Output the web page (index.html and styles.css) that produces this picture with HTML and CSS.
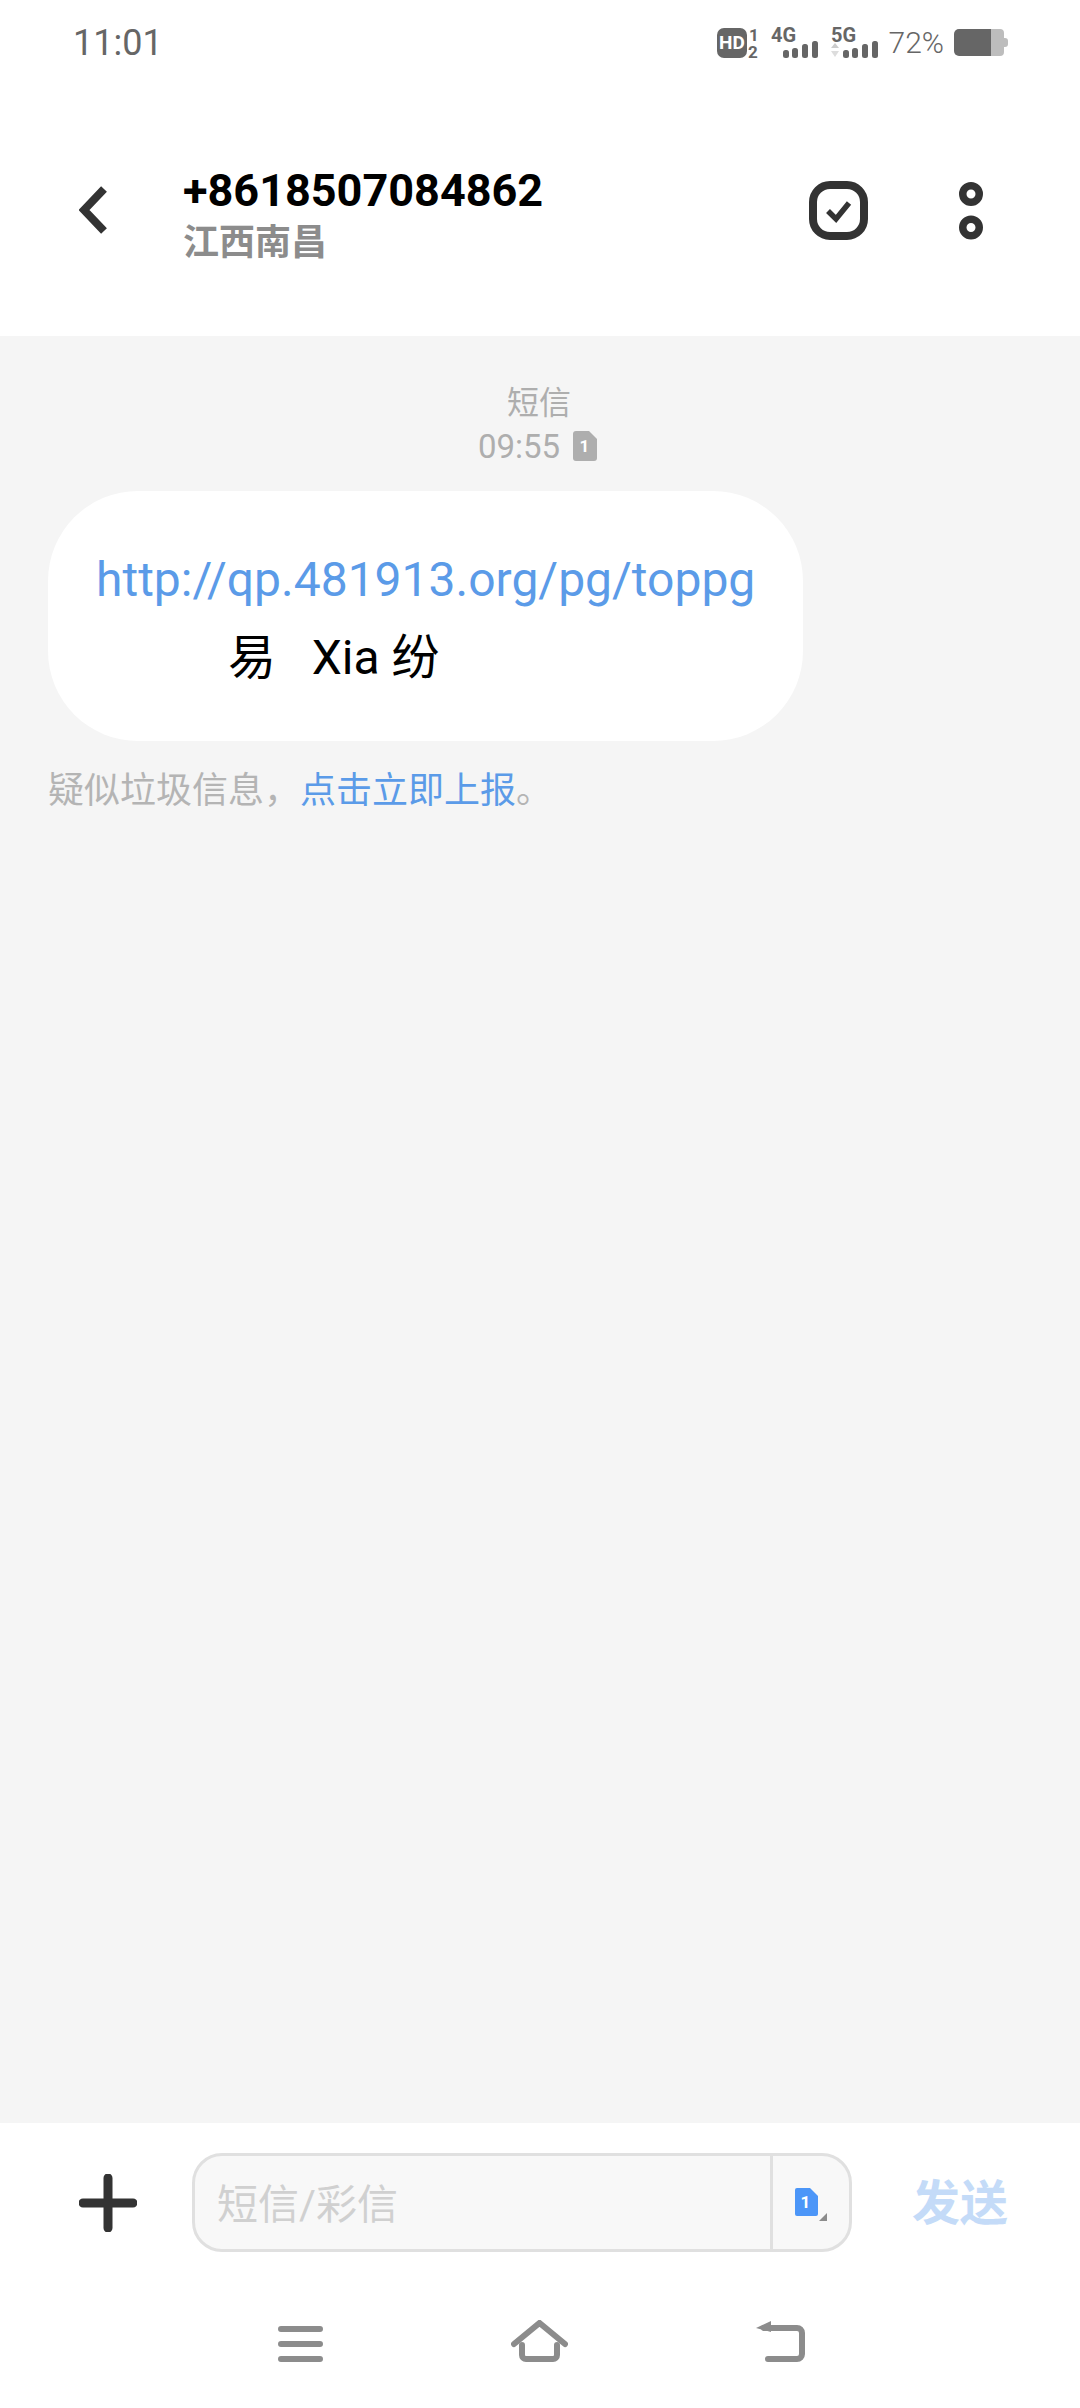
FILE: index.html
```html
<!DOCTYPE html>
<html lang="zh-CN">
<head>
    <meta charset="UTF-8">
    <meta name="viewport" content="width=device-width, initial-scale=1.0">
    <title>+8618507084862</title>
    <link rel="stylesheet" href="styles.css">
</head>
<body>
    <div class="page">
        <!-- Status bar -->
        <div class="status-bar">
            <span class="clock">11:01</span>
            <div class="status-icons">
                <svg class="icon-hd" width="42" height="44" viewBox="0 -7 42 44">
                    <rect x="0" y="0" width="30" height="30" rx="7" fill="#666"/>
                    <text x="15" y="21" class="hd-text" text-anchor="middle">HD</text>
                    <text x="37" y="13" class="sim-text" text-anchor="middle">1</text>
                    <text x="36" y="30" class="sim-text" text-anchor="middle">2</text>
                </svg>
                <svg class="icon-net" width="47" height="44" viewBox="0 -7 47 44">
                    <text x="0" y="14" class="net-text">4G</text>
                    <rect x="12" y="22" width="6" height="8" rx="2.5" fill="#666"/>
                    <rect x="21" y="20" width="6" height="10" rx="2.5" fill="#666"/>
                    <rect x="31" y="16" width="6" height="14" rx="2.5" fill="#666"/>
                    <rect x="41" y="13" width="6" height="17" rx="2.5" fill="#666"/>
                </svg>
                <svg class="icon-net" width="47" height="44" viewBox="0 -7 47 44">
                    <text x="0" y="14" class="net-text">5G</text>
                    <path d="M0 20 L4 15 L8 20 Z" fill="#ccc"/>
                    <path d="M0 23 L8 23 L4 29 Z" fill="#ddd"/>
                    <rect x="12" y="22" width="6" height="8" rx="2.5" fill="#666"/>
                    <rect x="21" y="20" width="6" height="10" rx="2.5" fill="#666"/>
                    <rect x="31" y="16" width="6" height="14" rx="2.5" fill="#666"/>
                    <rect x="41" y="13" width="6" height="17" rx="2.5" fill="#666"/>
                </svg>
                <span class="battery-text">72%</span>
                <svg class="icon-battery" width="54" height="27" viewBox="0 0 54 27">
                    <path d="M5 0 H37 V27 H5 A5 5 0 0 1 0 22 V5 A5 5 0 0 1 5 0 Z" fill="#666"/>
                    <path d="M37 0 H46 A4 4 0 0 1 50 4 V9 H51 A3 3 0 0 1 54 12 V15 A3 3 0 0 1 51 18 H50 V23 A4 4 0 0 1 46 27 H37 Z" fill="#bdbdbd"/>
                </svg>
            </div>
        </div>

        <!-- Header -->
        <div class="header">
            <svg class="back" width="29" height="48" viewBox="0 0 29 48">
                <path d="M25 3 L5 24 L25 45" fill="none" stroke="#333" stroke-width="8"/>
            </svg>
            <div class="contact">
                <div class="contact-number">+8618507084862</div>
                <div class="contact-place">江西南昌</div>
            </div>
            <svg class="select" width="59" height="59" viewBox="0 0 59 59">
                <rect x="4" y="4" width="51" height="51" rx="17" fill="none" stroke="#333" stroke-width="8"/>
                <path d="M19 30 L27 38 L40 22" fill="none" stroke="#333" stroke-width="5.5"/>
            </svg>
            <svg class="more" width="24" height="59" viewBox="0 0 24 59">
                <circle cx="12" cy="13" r="8.25" fill="none" stroke="#333" stroke-width="7.5"/>
                <circle cx="12" cy="46.5" r="8.25" fill="none" stroke="#333" stroke-width="7.5"/>
            </svg>
        </div>

        <!-- Messages -->
        <div class="messages">
            <div class="msg-type">短信</div>
            <div class="msg-time">
                09:55
                <svg class="sim-small" width="24" height="30" viewBox="0 0 24 30">
                    <path d="M3 0 H16 L24 8 V27 A3 3 0 0 1 21 30 H3 A3 3 0 0 1 0 27 V3 A3 3 0 0 1 3 0 Z" fill="#aeaeae"/>
                    <text x="11.5" y="21" class="sim-num" text-anchor="middle">1</text>
                </svg>
            </div>
            <div class="bubble">
                <div class="bubble-link">http://qp.481913.org/pg/toppg</div>
                <div class="bubble-text">易&nbsp;&nbsp;&nbsp;Xia 纷</div>
            </div>
            <div class="spam-note">疑似垃圾信息，<span class="spam-link">点击立即上报</span>。</div>
        </div>

        <!-- Composer -->
        <div class="composer">
            <svg class="plus" width="58" height="58" viewBox="0 0 58 58">
                <path d="M29 4 V54 M4 29 H54" stroke="#333" stroke-width="9" stroke-linecap="round"/>
            </svg>
            <div class="input-box">
                <div class="input-field">短信/彩信</div>
                <div class="input-sim">
                    <svg width="32" height="34" viewBox="0 0 32 34">
                        <path d="M2 0 H15 L23 8 V26 A2 2 0 0 1 21 28 H2 A2 2 0 0 1 0 26 V2 A2 2 0 0 1 2 0 Z" fill="#4c96f8"/>
                        <text x="10.5" y="20" class="sim-num" text-anchor="middle">1</text>
                        <path d="M32 25 V33 H24 Z" fill="#8c8c8c"/>
                    </svg>
                </div>
            </div>
            <div class="send">发送</div>
        </div>

        <!-- Navigation bar -->
        <div class="nav-bar">
            <svg width="45" height="42" viewBox="0 0 45 42">
                <path d="M3 10 H42 M3 25 H42 M3 40 H42" stroke="#8c8c8c" stroke-width="6" stroke-linecap="round" transform="translate(0 -1)"/>
            </svg>
            <svg width="57" height="42" viewBox="0 0 57 42">
                <path d="M3 24 L28.5 3 L54 24" fill="none" stroke="#8c8c8c" stroke-width="6" stroke-linecap="round"/>
                <path d="M11 25 V35 A4 4 0 0 0 15 39 H42 A4 4 0 0 0 46 35 V25" fill="none" stroke="#8c8c8c" stroke-width="6" stroke-linecap="round"/>
            </svg>
            <svg width="49" height="42" viewBox="0 0 49 42">
                <path d="M15 1 L0 8 L15 12 Z" fill="#8c8c8c"/>
                <path d="M8 8 H41 A5 5 0 0 1 46 13 V34 A5 5 0 0 1 41 39 H12" fill="none" stroke="#8c8c8c" stroke-width="6" stroke-linecap="round"/>
            </svg>
        </div>
    </div>
</body>
</html>
```

FILE: styles.css
```css
body {
    margin: 0;
    background-color: #fff;
    font-family: Roboto, "Noto Sans CJK SC", sans-serif;
}
svg {
    display: block;
    flex-shrink: 0;
}
.page {
    display: flex;
    flex-direction: column;
    height: 2408px;
    overflow: hidden;
}

/* Status bar */
.status-bar {
    display: flex;
    justify-content: space-between;
    align-items: center;
    height: 84px;
    padding: 0 72px 0 73px;
}
.clock {
    padding-top: 2px;
    font-size: 36px;
    color: #666;
}
.status-icons {
    display: flex;
    align-items: center;
    margin-top: 1px;
}
.icon-hd {
    margin-right: 12px;
}
.icon-net {
    margin-right: 13px;
}
.hd-text {
    font: 700 19px Roboto, sans-serif;
    fill: #fff;
}
.sim-text {
    font: 700 17px Roboto, sans-serif;
    fill: #666;
}
.net-text {
    font: 700 20px Roboto, sans-serif;
    fill: #666;
}
.battery-text {
    font-size: 30px;
    font-weight: 300;
    color: #666;
    margin-left: -2px;
    margin-right: 10px;
}

/* Header */
.header {
    display: flex;
    align-items: center;
    height: 252px;
    padding: 0 97px 0 79px;
}
.contact {
    flex: 1;
    margin-left: 75px;
    margin-top: 11px;
}
.contact-number {
    font-size: 45px;
    line-height: 50px;
    font-weight: 700;
    color: #000;
}
.contact-place {
    margin-top: 5px;
    font-size: 36px;
    line-height: 44px;
    font-weight: 700;
    color: #8c8c8c;
}
.more {
    margin-left: 91px;
}

/* Messages */
.messages {
    flex: 1;
    display: flex;
    flex-direction: column;
    padding: 45px 48px 0;
    background-color: #f5f5f5;
}
.msg-type {
    padding-right: 2px;
    font-size: 32px;
    line-height: 44px;
    color: #aeaeae;
    text-align: center;
}
.msg-time {
    display: flex;
    justify-content: center;
    align-items: center;
    gap: 13px;
    height: 42px;
    padding-right: 5px;
    font-size: 33px;
    color: #aeaeae;
}
.sim-num {
    font: 700 17px Roboto, sans-serif;
    fill: #fff;
}
.bubble {
    align-self: flex-start;
    margin-top: 24px;
    padding: 50px 48px 44px 48px;
    background-color: #fff;
    border-radius: 90px;
    font-size: 48px;
    line-height: 78px;
    white-space: nowrap;
}
.bubble-link {
    color: #5b9be8;
}
.bubble-text {
    padding-left: 132px;
    color: #000;
}
.spam-note {
    margin-top: 25px;
    font-size: 36px;
    line-height: 50px;
    color: #b4b4b4;
}
.spam-link {
    color: #5b9be8;
}

/* Composer */
.composer {
    display: flex;
    align-items: center;
    padding: 30px 0 0 79px;
}
.input-box {
    display: flex;
    box-sizing: border-box;
    width: 660px;
    height: 99px;
    margin-left: 55px;
    background-color: #f8f8f8;
    border: 3px solid #e0e0e0;
    border-radius: 30px;
}
.input-field {
    flex: 1;
    padding-left: 22px;
    font-size: 41px;
    line-height: 98px;
    color: #d0d0d0;
}
.input-sim {
    display: flex;
    align-items: center;
    box-sizing: border-box;
    width: 79px;
    padding: 4px 0 0 22px;
    border-left: 3px solid #e0e0e0;
}
.send {
    margin-left: 60px;
    padding-bottom: 8px;
    font-size: 48px;
    font-weight: 700;
    color: #c4dbf8;
}

/* Navigation bar */
.nav-bar {
    display: flex;
    justify-content: center;
    gap: 188px;
    padding: 68px 0 46px 3px;
}
```
